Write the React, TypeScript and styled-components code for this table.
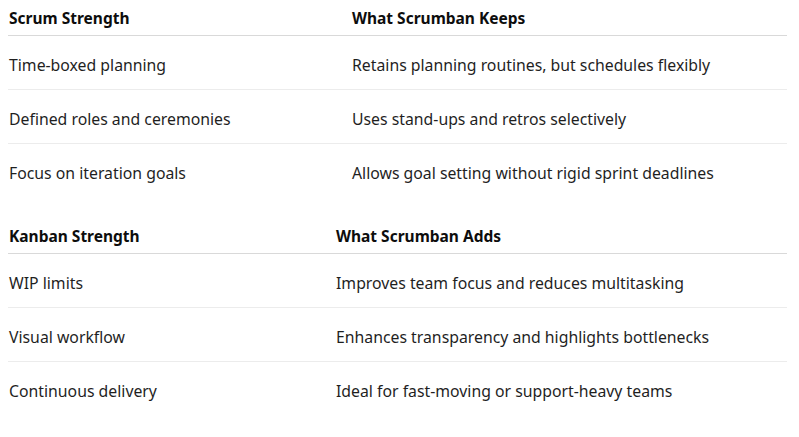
import React from 'react'
import styled, { createGlobalStyle } from 'styled-components'

const GlobalStyle = createGlobalStyle`
  html, body {
    margin: 0;
    background: #ffffff;
  }
  body {
    font-family: 'Noto Sans', 'Open Sans', sans-serif;
    color: #1a1a1a;
  }
`

interface Section {
  head: [string, string]
  split: number
  rows: [string, string][]
}

const sections: Section[] = [
  {
    head: ['Scrum Strength', 'What Scrumban Keeps'],
    split: 343,
    rows: [
      ['Time-boxed planning', 'Retains planning routines, but schedules flexibly'],
      ['Defined roles and ceremonies', 'Uses stand-ups and retros selectively'],
      ['Focus on iteration goals', 'Allows goal setting without rigid sprint deadlines']
    ]
  },
  {
    head: ['Kanban Strength', 'What Scrumban Adds'],
    split: 327,
    rows: [
      ['WIP limits', 'Improves team focus and reduces multitasking'],
      ['Visual workflow', 'Enhances transparency and highlights bottlenecks'],
      ['Continuous delivery', 'Ideal for fast-moving or support-heavy teams']
    ]
  }
]

const Page = styled.div`
  display: flex;
  flex-direction: column;
  gap: 20px;
  padding: 0 12px 0 8px;
  width: 779px;
`

const Table = styled.div`
  display: flex;
  flex-direction: column;
`

const Row = styled.div<{ $split: number; $head?: boolean; $last?: boolean }>`
  display: grid;
  grid-template-columns: ${p => p.$split}px 1fr;
  align-items: center;
  height: ${p => (p.$head ? 36 : 54)}px;
  box-sizing: border-box;
  border-bottom: ${p =>
    p.$last ? 'none' : p.$head ? '1px solid #d9d9d9' : '1px solid #ececec'};
  font-size: ${p => (p.$head ? 15.5 : 15.8)}px;
  font-weight: ${p => (p.$head ? 700 : 400)};
  color: ${p => (p.$head ? '#0d0d0d' : '#1f1f1f')};
  padding-top: ${p => (p.$head ? 0 : 4)}px;
`

const Cell = styled.span`
  padding-left: 1px;
  white-space: nowrap;
`

export default function App(): React.ReactElement {
  return (
    <>
      <GlobalStyle />
      <Page>
        {sections.map(s => (
          <Table key={s.head[0]}>
            <Row $split={s.split} $head>
              <Cell>{s.head[0]}</Cell>
              <Cell>{s.head[1]}</Cell>
            </Row>
            {s.rows.map((r, i) => (
              <Row key={r[0]} $split={s.split} $last={i === s.rows.length - 1}>
                <Cell>{r[0]}</Cell>
                <Cell>{r[1]}</Cell>
              </Row>
            ))}
          </Table>
        ))}
      </Page>
    </>
  )
}
